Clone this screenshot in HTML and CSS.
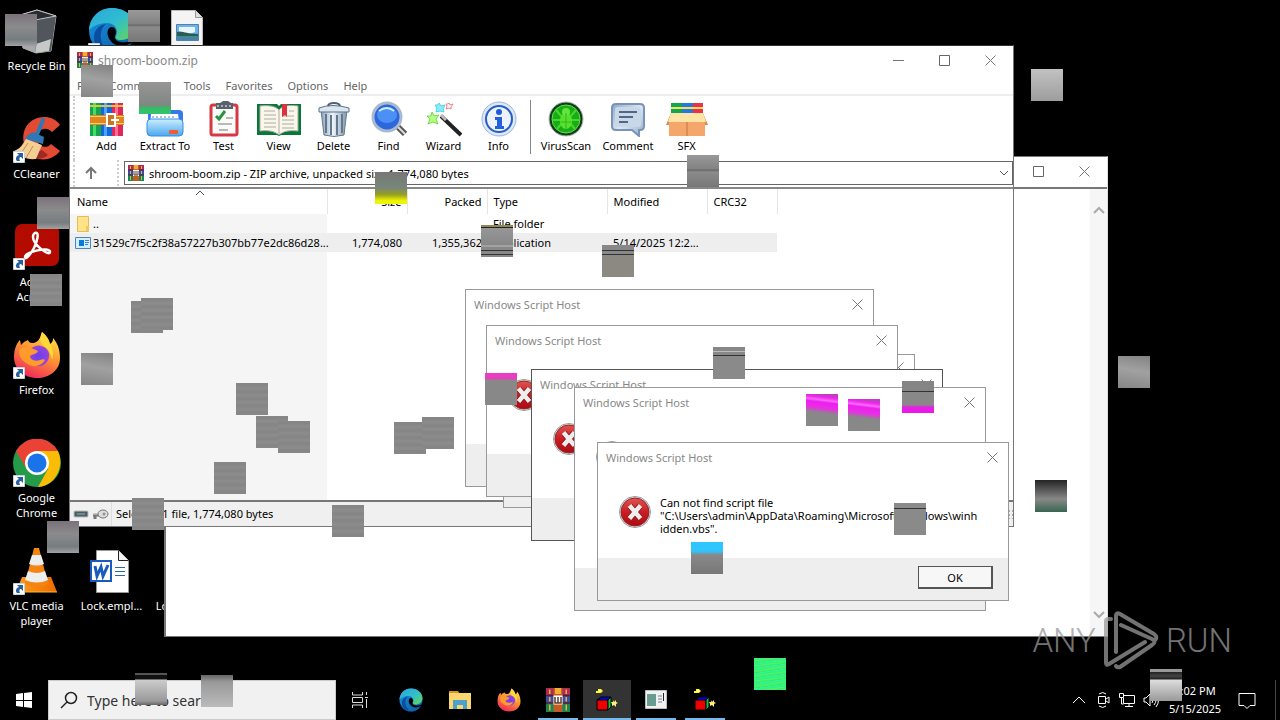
FILE: index.html
```html
<!DOCTYPE html>
<html lang="en">
<head>
<meta charset="utf-8">
<title>Desktop</title>
<link rel="stylesheet" href="styles.css">
</head>
<body>
<svg class="defs" aria-hidden="true">
  <defs>
    <linearGradient id="edge-a" x1="0" y1="0" x2="1" y2="1"><stop offset="0" stop-color="#2aa6dc"/><stop offset=".5" stop-color="#30bdcf"/><stop offset="1" stop-color="#67d94e"/></linearGradient>
    <linearGradient id="edge-b" x1="0" y1="0" x2="1" y2="1"><stop offset="0" stop-color="#1793df"/><stop offset="1" stop-color="#0c5aa6"/></linearGradient>
    <linearGradient id="fox-a" x1=".8" y1="0" x2=".3" y2="1"><stop offset="0" stop-color="#ffe94a"/><stop offset=".45" stop-color="#ff9730"/><stop offset="1" stop-color="#f0265c"/></linearGradient>
    <radialGradient id="fox-b"><stop offset="0" stop-color="#6b3df0"/><stop offset="1" stop-color="#9845d8"/></radialGradient>
    <linearGradient id="red-ball" x1="0" y1="0" x2="0" y2="1"><stop offset="0" stop-color="#df5550"/><stop offset=".5" stop-color="#c81d24"/><stop offset="1" stop-color="#a90c12"/></linearGradient>
    <linearGradient id="steel" x1="0" y1="0" x2="1" y2="0"><stop offset="0" stop-color="#8ca3b8"/><stop offset=".45" stop-color="#eef4fa"/><stop offset="1" stop-color="#8396aa"/></linearGradient>
    <linearGradient id="blue-box" x1="0" y1="0" x2="0" y2="1"><stop offset="0" stop-color="#cdeeff"/><stop offset="1" stop-color="#4ba7ee"/></linearGradient>
    <linearGradient id="orange" x1="0" y1="0" x2="1" y2="0"><stop offset="0" stop-color="#ff9d18"/><stop offset="1" stop-color="#ef6c00"/></linearGradient>
    <linearGradient id="comment-fill" x1="0" y1="0" x2="1" y2="1"><stop offset="0" stop-color="#8fa9c8"/><stop offset=".5" stop-color="#dbe7f4"/><stop offset="1" stop-color="#93acc9"/></linearGradient>
  </defs>
  <symbol id="rar" viewBox="0 0 16 16">
    <path fill="#b02a55" d="M0 0h16v5H0z"/><path fill="#384fa8" d="M0 5h16v5H0z"/><path fill="#198553" d="M0 10h16v6H0z"/>
    <path stroke="#571b3a" d="M0 5h16M0 10h16"/><path fill="#e7b23b" d="M2 1h1v3H2zM13 1h1v3h-1zM2 6h1v3H2zM13 6h1v3h-1zM2 11h1v4H2zM13 11h1v4h-1z"/>
    <path fill="#c35c22" d="M5 0h6v16H5z"/><path fill="#f3ad35" d="M6 0h4v4H6z"/><path fill="#fff" d="M5 5h6v6H5z"/><path stroke="#5d3b2a" d="M6 6v4h4V6M8 6v4" fill="none"/>
  </symbol>
  <symbol id="edge" viewBox="0 0 48 48">
    <circle cx="24" cy="24" r="23" fill="url(#edge-b)"/>
    <path fill="url(#edge-a)" d="M1 23C2 10 11 1 24 1c14 0 23 9 23 19 0 8-6 13-14 13-5 0-6-2-5-4 3-6-1-13-9-13C10 16 4 20 1 23z"/>
    <path fill="#0b4d9f" d="M18 17c-8 6-7 21 4 29-8 0-16-6-16-15 0-8 5-13 12-14z"/>
    <path fill="#000" d="M23 20c5 0 6 5 4 9-1 4 4 7 11 6 3 0 6-2 8-3-2 4-4 5-7 6-7 2-14 0-17-5-3-4-4-11 1-13z"/>
  </symbol>
  <symbol id="firefox" viewBox="0 0 48 48">
    <path fill="url(#fox-a)" d="M29 1c5 4 7 8 8 12 3-2 3-4 3-6 5 6 7 12 7 20 0 12-10 20-23 20S1 38 1 26C1 19 3 13 7 9l1 5 3-3 4-2c1 3 3 3 6 3 3-1 6-3 8-11z"/>
    <path fill="url(#fox-b)" d="M15 23c2-7 9-11 16-7 6 3 7 11 2 16-5 5-14 4-18-2z"/>
    <path fill="#ff9a2d" d="M6 19c4-4 12-3 19 1-1 3-5 3-8 5 0 3 4 6 10 4 3-1 4-1 5 0-4 7-13 8-19 3-5-3-7-8-7-13z"/>
    <path fill="#ffd93a" d="M29 1c5 4 7 8 8 12 3 4 4 11 2 16-1-7-4-11-8-14-5-4-4-9-2-14z"/>
  </symbol>
  <symbol id="shortcut" viewBox="0 0 12 12"><path fill="#fff" stroke="#c7d2dd" d="M.5.5h11v11H.5z"/><path fill="#285f9f" d="M4 2h6v6L8 6C6 6 6 8 7 10H4C2 8 3 5 6 4z"/></symbol>
  <symbol id="close" viewBox="0 0 11 11"><path d="m.5.5 10 10m0-10-10 10" fill="none" stroke="#777"/></symbol>
  <symbol id="maximize" viewBox="0 0 11 11"><path d="M.5.5h10v10H.5z" fill="none" stroke="#666"/></symbol>
  <symbol id="error" viewBox="0 0 32 32"><circle cx="16" cy="16" r="15.500" fill="#e8e8e8" stroke="#999"/><circle cx="16" cy="16" r="14" fill="url(#red-ball)" stroke="#96252a"/><path d="m11 10 10 12m0-12L11 22" stroke="#8f1015" stroke-width="6"/><path d="m10.500 9.500 11 13m0-13-11 13" stroke="#eee" stroke-width="4.500"/></symbol>
  <symbol id="cube" viewBox="0 0 24 24"><path fill="#00f" stroke="#000" d="m2 12 4-3h10l-3 3z"/><path fill="#e00" stroke="#000" d="M2 12h11v10H2z"/><path fill="#10c43a" stroke="#000" d="m13 12 3-3v10l-3 3z"/><path fill="#ff0" d="M1 3h2V1h3l2 2-2 2H1z"/><path fill="#fff" d="M4 2h2v2H4z"/><path fill="#ffed74" d="m18 12 1 2 2-2v2l2 1-2 1v3l-2-2-2 1v-2l-1-2h2z"/></symbol>
</svg>

<main class="desktop">
  <section class="icons" aria-label="Desktop icons">
    <a class="icon" href="#"><svg viewBox="0 0 48 48"><path fill="#666c72" stroke="#b4b8ba" d="m4 9 20-6 19 6-5 35-15 2-13-5z"/><path fill="#a5aaae" d="m4 9 18 4 1 33-13-5z"/><path fill="#50565b" d="m22 13 21-4-5 35-15 2z"/><path fill="#282b30" stroke="#c4c4c4" d="m4 9 20-6 19 6-21 4z"/><path fill="#c8c8c8" d="m23 37 15-5-2 12-13 2z"/></svg><span>Recycle Bin</span></a>
    <a class="icon" href="#" aria-label="Microsoft Edge"><svg viewBox="0 0 48 48"><use href="#edge"/><use href="#shortcut" x="0" y="36" width="12" height="12"/></svg></a>
    <a class="icon" href="#" aria-label="Image"><svg viewBox="0 0 48 48"><path fill="#f4f4f4" stroke="#bbb" d="M8.500 3.500h24l7 7v36h-31z"/><path fill="#ddd" stroke="#999" d="M32.500 3.500v7h7"/><path fill="#6ab4e9" stroke="#5480af" d="M13.500 17.500h22v16h-22z"/><path fill="#e7f5fb" d="M16 20h16v5l-8 3-8-4z"/><path fill="#285d54" d="M14 25c7-1 9 2 21 2v2H14z"/><path fill="#4585a2" d="M14 29h21v4H14z"/></svg></a>
    <a class="icon" href="#"><svg viewBox="0 0 48 48"><path fill="#e34a33" d="M47 10C39-2 18 0 12 14c-4 9-1 22 7 27 9 6 21 4 28-5l-9-7c-5 6-15 2-14-7 1-8 9-11 15-5z"/><path fill="#9f2925" d="M12 27c3 9 9 12 17 8l6 5c-7 6-16 4-22-2z"/><path stroke="#2d78b8" stroke-width="4" stroke-linecap="round" d="m30 5-7 17"/><path fill="#2f78b4" d="m15 20 5-3 11 5-1 7-18-5z"/><path fill="#f5ce94" d="M13 24 29 30l-6 14C14 45 5 41 1 36c6-2 9-7 12-12z"/><path stroke="#c78b52" d="m15 28-8 12m13-9-7 12"/><use href="#shortcut" x="0" y="36" width="12" height="12"/></svg><span>CCleaner</span></a>
    <a class="icon row3" href="#"><svg viewBox="0 0 48 48"><rect x="2" y="1" width="44" height="42" rx="7" fill="#b30b00"/><path fill="none" stroke="#fff" stroke-width="2.500" d="M22 10c5-2 2 9-1 15S12 38 12 34c0-5 25-11 25-5 0 5-17-7-17-15 0-2 0-3 2-4z"/><use href="#shortcut" y="35" width="12" height="12"/></svg><span>Adobe Acrobat</span></a>
    <a class="icon row4" href="#"><svg viewBox="0 0 48 48"><use href="#firefox"/><use href="#shortcut" y="36" width="12" height="12"/></svg><span>Firefox</span></a>
    <a class="icon row5" href="#"><svg viewBox="0 0 48 48"><circle cx="24" cy="24" r="24" fill="#249b48"/><path fill="#ea4335" d="M3 12A24 24 0 0 1 45 12H24L13 29z"/><path fill="#fbbc05" d="M24 12h21c7 16-3 35-20 36l10-18z"/><circle cx="24" cy="24" r="12" fill="#fff"/><circle cx="24" cy="24" r="9.500" fill="#1a73e8"/><use href="#shortcut" y="36" width="12" height="12"/></svg><span>Google Chrome</span></a>
    <a class="icon row6" href="#"><svg viewBox="0 0 48 48"><path fill="url(#orange)" d="m9 30-6 15h41l-6-15z"/><path fill="#f48513" d="m21 1-9 36q12 6 23 0L26 1z"/><path fill="#eee" d="m19 8-3 9q8 3 15 0L28 8zM15 24l-3 9q12 5 23 0l-3-9q-8 4-17 0z"/><path stroke="#ffb53b" d="M3 45h41"/><use href="#shortcut" y="36" width="12" height="12"/></svg><span>VLC media player</span></a>
    <a class="icon row6 col2" href="#"><svg viewBox="0 0 48 48"><path fill="#fff" stroke="#999" d="M8.500 3.500h22l10 10v32h-32z"/><path fill="#f2f2f2" stroke="#222" d="M30.500 3.500v10h10"/><path stroke="#2864b4" d="M27 20.500h10m-10 4h10m-10 4h10"/><path fill="#fff" stroke="#185abd" stroke-width="2" d="M3 14h20v20H3z"/><path fill="none" stroke="#185abd" stroke-width="3" d="m7 19 2 10 4-9 2 9 5-11"/></svg><span>Lock.empl...</span></a>
    <a class="icon row6 col3" href="#"><svg viewBox="0 0 48 48"></svg><span>Lock.empl...</span></a>
  </section>

  <section class="window back" aria-label="Background window">
    <header class="titlebar"><span class="title"></span><button aria-label="Maximize"><svg><use href="#maximize"/></svg></button><button aria-label="Close"><svg><use href="#close"/></svg></button></header>
    <div class="backbody"><div class="scroll"><svg viewBox="0 0 12 8"><path d="m1 7 5-5 5 5"/></svg><svg viewBox="0 0 12 8"><path d="m1 1 5 5 5-5"/></svg></div></div>
  </section>

  <section class="window archive" aria-label="shroom-boom.zip">
    <header class="titlebar"><svg class="appicon"><use href="#rar"/></svg><span class="title">shroom-boom.zip</span><button aria-label="Minimize"><svg viewBox="0 0 11 11"><path stroke="#777" d="M0 5.500h11"/></svg></button><button aria-label="Maximize"><svg><use href="#maximize"/></svg></button><button aria-label="Close"><svg><use href="#close"/></svg></button></header>
    <nav class="menu"><button>File</button><button>Commands</button><button>Tools</button><button>Favorites</button><button>Options</button><button>Help</button></nav>
    <div class="toolbar">
      <button><svg viewBox="0 0 36 36"><path fill="#16a34e" d="M1 2h11v33H1z"/><path fill="#1766d8" d="M12 2h11v33H12z"/><path fill="#dc285a" d="M23 2h11v33H23z"/><path fill="#43dd6a" d="M4 2h3v33H4z"/><path fill="#4ba3ff" d="M15 2h3v33h-3z"/><path fill="#ff6e94" d="M26 2h3v33h-3z"/><path fill="#dfc73d" d="M1 4h33v2H1z"/><path fill="#e08521" d="M1 14h34v10H1z"/><path stroke="#ffcf59" d="M1 15.500h34M1 22.500h34"/><rect x="18" y="13" width="8" height="12" fill="#c87623" stroke="#fff" stroke-width="2"/><path stroke="#fff" stroke-width="2" d="M22 19h8"/></svg><span>Add</span></button>
      <button class="wide"><svg viewBox="0 0 40 36"><rect x="3" y="9" width="35" height="24" rx="4" fill="#3679e9"/><path fill="#fff" d="M6 13h27l2 14H5z"/><path stroke="#5a83ba" stroke-dasharray="2 2" d="M7 16h24"/><rect x="2" y="18" width="36" height="17" rx="4" fill="url(#blue-box)" stroke="#348ee3"/><rect x="24" y="29" width="9" height="4" rx="1" fill="#f05b34"/></svg><span>Extract To</span></button>
      <button><svg viewBox="0 0 36 36"><rect x="5" y="4" width="26" height="30" rx="2" fill="#f8fbf7" stroke="#d63942" stroke-width="3"/><path fill="#59616c" d="M10 2h4l3-2h5l3 2h2v6H10z"/><path stroke="#fff" stroke-dasharray="2 2" d="M11 5h15"/><path fill="none" stroke="#2b9143" stroke-width="3" d="m10 15 3 3 6-8"/><path stroke="#777" d="M20 17h7M12 23h14m-13 6h9"/></svg><span>Test</span></button>
      <button><svg viewBox="0 0 44 36"><path fill="#087838" d="M0 3h20l2 2 2-2h20v31H24l-2 1-2-1H0z"/><path fill="#faf7e9" stroke="#aaa" d="M3 5c8-1 16 0 19 4 4-5 12-5 19-4v25c-8-1-15 0-19 4-4-4-12-5-19-4z"/><path stroke="#aaa" d="M22 9v24M7 10h11M7 14h12M7 18h12M7 22h12M7 26h12M25 15h12m-12 4h12m-12 4h12m-12 4h12M32 10h5"/><path fill="#de303e" d="M25 3h5v13l-2-2-3 2z"/></svg><span>View</span></button>
      <button><svg viewBox="0 0 36 36"><path fill="url(#steel)" stroke="#65798f" d="M5 9h26l-3 25q-10 3-20 0z"/><path stroke="#61798e" stroke-width="2" d="M10 13v19m5-18v20m6-20v20m5-21v19"/><path fill="#dce6ef" stroke="#58708b" d="M3 7q13-5 30 0v4H3z"/><path fill="none" stroke="#4e6071" stroke-width="2" d="M12 5c1-4 11-4 12 0"/></svg><span>Delete</span></button>
      <button><svg viewBox="0 0 36 36"><path stroke="#555" stroke-width="6" d="m25 24 9 9"/><path stroke="#ddd" stroke-width="2" d="m25 24 9 9"/><circle cx="16" cy="16" r="14" fill="#2d66dd" stroke="#a9b9d0" stroke-width="3"/><ellipse cx="16" cy="14" rx="10" ry="8" fill="#4b90f4"/><path fill="none" stroke="#cbedff" stroke-width="2" d="M8 10q8-6 15 0"/></svg><span>Find</span></button>
      <button><svg viewBox="0 0 36 36"><path stroke="#222" stroke-width="4" d="m15 15 20 19"/><path stroke="#bbb" stroke-width="3" d="m15 14 5 5"/><path fill="#b8ff85" stroke="#71dc46" d="m6 11 2 4 5-1-3 4 2 5-5-2-5 2 2-5-3-3h4z"/><path fill="#8dedfa" stroke="#4ad4ed" d="m13 2 2 3 4-1-2 4 1 3-4-1-4 1 1-4-2-3h3z"/><path fill="none" stroke="#ff7d85" d="m23 2 1 2 3-1-2 3v2l-2-1-3 1 1-3-1-2h2z"/></svg><span>Wizard</span></button>
      <button><svg viewBox="0 0 36 36"><circle cx="18" cy="18" r="17" fill="#dfe8f6" stroke="#9bb5dc"/><circle cx="18" cy="18" r="13" fill="#edf3fc" stroke="#275fc9" stroke-width="2"/><circle cx="18" cy="11" r="3" fill="#205bdc"/><path fill="#245fdd" d="M14 16h7v9h2v3h-9v-3h2v-6h-2z"/></svg><span>Info</span></button>
      <i class="separator"></i>
      <button class="wide"><svg viewBox="0 0 36 36"><circle cx="18" cy="18" r="17" fill="#113d1c" stroke="#afbdb2"/><circle cx="18" cy="18" r="14" fill="#18ac18" stroke="#64e345"/><path stroke="#45d82b" stroke-width="2" d="m8 9 6 7m14-7-6 7M5 19h8m18 0h-8M9 28l5-6m13 6-5-6"/><ellipse cx="18" cy="20" rx="6" ry="8" fill="#58e12b"/><circle cx="18" cy="11" r="4" fill="#64e53b"/><path stroke="#30b525" d="M18 12v16m-5-7h10"/></svg><span>VirusScan</span></button>
      <button class="wide"><svg viewBox="0 0 36 36"><path fill="url(#comment-fill)" stroke="#7994b6" stroke-width="2" d="M6 3h24q4 0 4 4v18q0 4-4 4h-1v6l-7-6H6q-4 0-4-4V7q0-4 4-4z"/><rect x="5" y="6" width="26" height="20" rx="3" fill="#c9d8e9"/><path stroke="#506888" stroke-width="2" d="M9 11h18M9 16h14M9 21h9"/></svg><span>Comment</span></button>
      <button><svg viewBox="0 0 44 36"><path fill="#e7334f" d="M28 2h10v12H28z"/><path fill="#2479de" d="M17 2h11v12H17z"/><path fill="#11a657" d="M6 2h11v12H6z"/><path fill="#ffe04b" d="M6 6h32v2H6z"/><path fill="#d68954" d="m6 12-5 12h5zm32 0 5 12h-5z"/><path fill="#f4a66b" d="M4 18h36v17H4z"/><path fill="#ffe5a5" d="M6 12h32l3 9H3z"/><path stroke="#bd7749" d="M22 21v14"/></svg><span>SFX</span></button>
    </div>
    <div class="addressrow"><button class="up" aria-label="Up"><svg viewBox="0 0 12 14"><path fill="none" stroke="#777" stroke-width="2" d="M6 13V2M1 7l5-5 5 5"/></svg></button><div class="address"><svg><use href="#rar"/></svg><input aria-label="Archive path" value="shroom-boom.zip - ZIP archive, unpacked size 1,774,080 bytes"><svg class="chevron" viewBox="0 0 10 6"><path d="m1 1 4 4 4-4"/></svg></div></div>
    <div class="filelist">
      <svg class="sort" viewBox="0 0 10 6"><path d="m1 5 4-4 4 4"/></svg>
      <table>
        <colgroup><col class="c-name"><col class="c-num"><col class="c-num"><col class="c-type"><col class="c-mod"><col class="c-crc"></colgroup>
        <thead><tr><th>Name</th><th class="num">Size</th><th class="num">Packed</th><th>Type</th><th>Modified</th><th>CRC32</th></tr></thead>
        <tbody>
          <tr><td><span class="file"><svg viewBox="0 0 16 16"><path fill="#ffe38b" stroke="#e7bd52" d="M2.500.5h11v15h-11z"/><path fill="#f3c85b" d="M11 10h3v5h-3z"/></svg>..</span></td><td></td><td></td><td>File folder</td><td></td><td></td></tr>
          <tr class="selected"><td><span class="file"><svg viewBox="0 0 16 16"><path fill="#d9edf8" stroke="#4c86b4" d="M.5 2.500h15v11H.5z"/><path fill="#0879df" d="M4 5h5v6H4z"/><path stroke="#338bcf" d="M10 5.500h4m-4 2h4m-4 2h3"/></svg>31529c7f5c2f38a57227b307bb77e2dc86d28...</span></td><td class="num">1,774,080</td><td class="num">1,355,362</td><td>Application</td><td>5/14/2025 12:2...</td><td></td></tr>
        </tbody>
      </table>
    </div>
    <footer class="status"><svg viewBox="0 0 36 14"><rect x="1" y="4" width="14" height="6" rx="1" fill="#4c5e65" stroke="#b7bfc2"/><path stroke="#9eadb1" d="M4 7h8"/><path stroke="#777" stroke-width="3" d="M20 8h10m-8 0v4"/><path stroke="#ddd" d="M20 7h10"/><ellipse cx="30" cy="7" rx="5" ry="4" fill="#ddd" stroke="#777"/><circle cx="31" cy="7" r="1" fill="#fff" stroke="#777"/></svg><span>Selected 1 file, 1,774,080 bytes</span><i class="grip"></i></footer>
  </section>

  <section class="dialog d1"><header><span>Windows Script Host</span><button aria-label="Close"><svg><use href="#close"/></svg></button></header><div class="message"></div><footer></footer></section>
  <section class="dialog d2"><header><span></span><button aria-label="Close"><svg><use href="#close"/></svg></button></header><div class="message"></div><footer></footer></section>
  <section class="dialog d3"><header><span>Windows Script Host</span><button aria-label="Close"><svg><use href="#close"/></svg></button></header><div class="message"><svg><use href="#error"/></svg></div><footer></footer></section>
  <section class="dialog d4"><header><span>Windows Script Host</span><button aria-label="Close"><svg><use href="#close"/></svg></button></header><div class="message"><svg><use href="#error"/></svg></div><footer></footer></section>
  <section class="dialog d5"><header><span>Windows Script Host</span><button aria-label="Close"><svg><use href="#close"/></svg></button></header><div class="message"><svg><use href="#error"/></svg></div><footer></footer></section>
  <section class="dialog d6"><header><span>Windows Script Host</span><button aria-label="Close"><svg><use href="#close"/></svg></button></header><div class="message"><svg><use href="#error"/></svg><p>Can not find script file<br>"C:\Users\admin\AppData\Roaming\Microsoft\Windows\winh<br>idden.vbs".</p></div><footer><button class="ok">OK</button></footer></section>

  <div class="brand"><span>ANY</span><svg viewBox="0 0 56 64"><path fill="none" stroke="currentColor" stroke-width="4" stroke-linecap="round" stroke-linejoin="round" d="M8 10H5q-2 0-2 3v41q0 3 3 1l36-22M13 43V7q0-4 4-2l34 20q4 3 1 6M18 16l31 14q5 3 0 6L17 58q-3 1-4-1"/></svg><span>RUN</span></div>
</main>

<footer class="taskbar">
  <button class="start" aria-label="Start"><svg viewBox="0 0 16 16"><path fill="#fff" d="m0 2 7-1v7H0zM8 1l8-1v8H8zM0 9h7v6l-7-1zM8 9h8v7l-8-1z"/></svg></button>
  <label class="search"><svg viewBox="0 0 18 18"><circle cx="11" cy="7" r="5.500"/><path d="m7 11-6 6"/></svg><input aria-label="Search" placeholder="Type here to search"></label>
  <button class="taskview" aria-label="Task View"><svg viewBox="0 0 16 16"><path d="M.5 0v3h10V0M.5 5.500h10v5H.5zM.5 16v-3h10v3M14.500 0v3m0 4v9M13 5.500h3"/></svg></button>
  <nav class="apps">
    <button aria-label="Edge"><svg><use href="#edge"/></svg></button>
    <button aria-label="File Explorer"><svg viewBox="0 0 24 24"><path fill="#d9981b" d="M1 3h9l2 3H1z"/><path fill="#fbd66e" d="M1 5h22v16H1z"/><path fill="#4ba0cd" d="M5 12h14v9h-4v-4H9v4H5z"/></svg></button>
    <button aria-label="Firefox"><svg><use href="#firefox"/></svg></button>
    <button class="open" aria-label="WinRAR"><svg><use href="#rar"/></svg></button>
    <button class="open active" aria-label="Application"><svg><use href="#cube"/></svg></button>
    <button class="open" aria-label="Script Host"><svg viewBox="0 0 24 24"><path fill="#f1f1f1" stroke="#bbb" d="M1.500 2.500h21v18h-21z"/><path fill="#689b91" d="M3 6h9v12H3z"/><path stroke="#73858c" d="M14 8h4m-4 3h4m-4 3h4"/><path stroke="#222" d="M19.500 5v8"/></svg></button>
    <button class="open" aria-label="Application"><svg><use href="#cube"/></svg></button>
  </nav>
  <div class="tray">
    <svg viewBox="0 0 16 16"><path d="m2 11 6-6 6 6"/></svg>
    <svg viewBox="0 0 16 16"><path d="M3.500 4.500h7v7h-7zM11 7l3-2v6l-3-2M4 2q4-3 7 0M4 14q4 3 7 0"/></svg>
    <svg viewBox="0 0 16 16"><path d="M5 3.500h10.500v8H4.500V6M10 12v3M6 14.500h8M.5 1.500h4v4h-4zM2.500 6v6h2"/></svg>
    <svg viewBox="0 0 16 16"><path d="M1 6h2l4-4v12l-4-4H1zM9 6q2 2 0 5m2-7q4 4 0 9m2-11q5 6 0 13"/></svg>
    <time>5:02 PM<br>5/15/2025</time>
    <svg class="notice" viewBox="0 0 18 18"><path d="M1 2.500h16v12h-5l-3 3-3-3H1z"/></svg>
    <i class="peek"></i>
  </div>
</footer>

<div class="tiles" aria-hidden="true">
  <i class="t01 dim"></i><i class="t02"></i><i class="t03"></i><i class="t04 green"></i><i class="t05 light"></i><i class="t06"></i><i class="t07 yellow"></i><i class="t08 dim"></i><i class="t09"></i><i class="t10 bars"></i><i class="t11 bars"></i><i class="t12"></i><i class="t13"></i><i class="t14"></i><i class="t15"></i><i class="t16"></i><i class="t17"></i><i class="t18"></i><i class="t19"></i><i class="t20"></i><i class="t21"></i><i class="t22"></i><i class="t23 dim"></i><i class="t24 dark"></i><i class="t25"></i><i class="t26 bars"></i><i class="t27 pinktop"></i><i class="t28 pink"></i><i class="t29 pink"></i><i class="t30 pinkbottom"></i><i class="t31 bars"></i><i class="t32 blue"></i><i class="t33 lime"></i><i class="t34 split"></i><i class="t35 split"></i><i class="t36 fade"></i>
</div>
</body>
</html>
```
FILE: styles.css
```css
* { box-sizing: border-box; }
body { margin: 0; height: 100vh; overflow: hidden; display: flex; flex-direction: column; position: relative; background: #000; color: #000; font: 11px/13px "Noto Sans", "Open Sans", sans-serif; }
button, input { font: inherit; color: inherit; border: 0; background: none; padding: 0; margin: 0; }
svg { display: block; flex: none; }
.defs { position: absolute; width: 0; height: 0; }
.desktop { flex: 1; min-height: 0; position: relative; }

.icons { display: grid; grid-template-columns: repeat(3, 75px); grid-auto-rows: 108px; padding-top: 7px; margin-left: -1px; }
.icon { color: #fff; text-decoration: none; display: flex; flex-direction: column; align-items: center; gap: 3px; text-align: center; line-height: 15px; }
.icon svg { width: 48px; height: 48px; }
.icon span { max-width: 66px; }
.row3 { grid-row: 3; grid-column: 1; }
.row4 { grid-row: 4; grid-column: 1; }
.row5 { grid-row: 5; grid-column: 1; }
.row6 { grid-row: 6; grid-column: 1; }
.col2 { grid-column: 2; }
.col3 { grid-column: 3; }

.window { position: absolute; background: #fff; display: flex; flex-direction: column; }
.back { left: 164px; top: 156px; width: 944px; height: 481px; border: 1px solid #777; border-left-width: 2px; border-right-color: #ddd; }
.archive { left: 69px; top: 45px; width: 945px; height: 482px; border: 1px solid #777; border-top-color: #333; }
.titlebar { height: 30px; display: flex; align-items: center; color: #888; font-size: 12px; flex: none; padding-bottom: 2px; }
.titlebar .title { flex: 1; padding-left: 5px; }
.titlebar .appicon { width: 16px; height: 16px; margin-left: 7px; }
.titlebar button { width: 46px; display: grid; place-items: center; }
.titlebar button svg { width: 11px; height: 11px; }
.backbody { flex: 1; border-top: 2px solid #777; display: flex; justify-content: flex-end; }
.scroll { width: 17px; background: #f6f6f6; display: flex; flex-direction: column; justify-content: space-between; align-items: center; padding: 17px 0; }
.scroll svg { width: 12px; height: 8px; }
.scroll path { fill: none; stroke: #aaa; stroke-width: 2; }

.menu { height: 20px; display: flex; gap: 15px; padding-left: 7px; border-bottom: 2px solid #eee; color: #666; flex: none; }
.toolbar { height: 64px; display: flex; margin-left: 3px; padding-left: 4px; border-left: 2px dotted #ccc; flex: none; }
.toolbar button { width: 55px; display: flex; flex-direction: column; align-items: center; padding-top: 5px; gap: 2px; white-space: nowrap; }
.toolbar button.wide { width: 62px; }
.toolbar svg { height: 36px; min-width: 36px; }
.separator { width: 1px; height: 54px; background: #888; margin: 4px; }
.addressrow { height: 27px; display: flex; margin-left: 3px; padding-bottom: 1px; border-left: 2px dotted #ccc; flex: none; }
.up { width: 44px; padding-right: 10px; display: grid; place-items: center; border-right: 2px dotted #ccc; }
.up svg { width: 12px; height: 14px; }
.address { flex: 1; margin: 1px 0 1px 5px; border: 1px solid #666; display: flex; align-items: center; padding: 0 3px; gap: 5px; }
.address svg { width: 16px; height: 16px; }
.address input { flex: 1; min-width: 0; outline: 0; }
.address .chevron { width: 10px; height: 6px; }
.chevron path, .sort path { fill: none; stroke: #555; }

.filelist { flex: 1; position: relative; border-top: 2px solid #888; border-bottom: 2px solid #777; background: linear-gradient(#f5f5f5, #f5f5f5) no-repeat left / 257px 100%; overflow: hidden; }
.sort { position: absolute; left: 125px; top: 1px; width: 10px; height: 6px; }
.filelist table { width: 707px; border-collapse: collapse; table-layout: fixed; }
.filelist thead { background: #fff; }
.filelist tr { height: 19px; }
.filelist thead tr { height: 25px; }
.filelist th { font-weight: 400; text-align: left; padding: 0 6px; border-right: 1px solid #e5e5e5; }
.filelist th:first-child { padding-left: 7px; }
.filelist td { padding: 0 6px; white-space: nowrap; }
.filelist .num { text-align: right; padding-right: 5px; }
.filelist td:first-child { padding: 0 0 0 5px; }
.c-name { width: 257px; }
.c-num { width: 80px; }
.c-type { width: 120px; }
.c-mod { width: 100px; }
.c-crc { width: 70px; }
.selected { background: #eee; }
.file { display: flex; align-items: center; gap: 2px; }
.file svg { width: 16px; height: 16px; }
.status { height: 24px; background: #f0f0f0; display: flex; align-items: center; padding-left: 3px; gap: 2px; flex: none; }
.status > svg { width: 36px; height: 14px; }
.status span { flex: 1; border-left: 1px solid #ddd; padding-left: 4px; line-height: 24px; }
.grip { width: 10px; height: 10px; background: radial-gradient(#aaa 1px, transparent 1px) 0 0 / 4px 4px; }

.dialog { position: absolute; width: 412px; background: #fff; border: 1px solid #999; display: flex; flex-direction: column; }
.dialog header { height: 28px; display: flex; align-items: center; justify-content: space-between; padding: 0 10px 0 8px; color: #888; font-size: 11px; flex: none; }
.dialog header svg { width: 11px; height: 11px; }
.message { flex: 1; min-height: 0; padding: 25px 20px 0 21px; display: flex; gap: 9px; overflow: hidden; }
.message svg { width: 32px; height: 32px; }
.message p { margin: 0; white-space: nowrap; }
.dialog footer { height: 42px; background: #eee; padding: 8px 15px; display: flex; justify-content: flex-end; align-items: flex-start; flex: none; }
.ok { width: 75px; height: 23px; border: 1px solid #555; border-right-width: 2px; border-bottom-width: 2px; background: #f7f7f7; }
.d1 { left: 465px; top: 289px; width: 409px; height: 198px; }
.d2 { left: 503px; top: 354px; height: 154px; }
.d2 header { height: 24px; }
.d3 { left: 486px; top: 325px; height: 172px; }
.d4 { left: 531px; top: 369px; height: 172px; border-color: #555; }
.d5 { left: 574px; top: 387px; height: 224px; }
.d6 { left: 597px; top: 442px; height: 159px; }

.brand { position: absolute; right: 48px; top: 609px; display: flex; align-items: center; gap: 7px; color: #999; opacity: .75; font: 300 33px/64px "Roboto", sans-serif; }
.brand svg { width: 56px; height: 64px; }

.taskbar { height: 40px; display: flex; align-items: stretch; flex: none; color: #fff; position: relative; }
.start, .taskview { width: 48px; display: grid; place-items: center; }
.start svg, .taskview svg { width: 16px; height: 16px; }
.taskview path { fill: none; stroke: #ddd; }
.search { width: 288px; background: #f1f1f1; border: 1px solid #ccc; display: flex; align-items: center; gap: 9px; padding-left: 11px; }
.search svg { width: 18px; height: 18px; }
.search svg circle, .search svg path { fill: none; stroke: #222; stroke-width: 1.500; }
.search input { flex: 1; min-width: 0; font-size: 14px; }
.search input::placeholder { color: #333; opacity: 1; }
.apps { display: flex; gap: 1px; padding-left: 3px; flex: 1; }
.apps button { width: 48px; display: flex; flex-direction: column; align-items: center; justify-content: space-between; padding-top: 8px; }
.apps svg { width: 24px; height: 24px; }
.apps .open::after { content: ""; width: 40px; height: 2px; background: #76b9ed; }
.apps .active { background: #333; }
.apps .active::after { width: 48px; }
.tray { display: flex; align-items: center; gap: 8px; padding-right: 4px; }
.tray svg { width: 16px; height: 16px; }
.tray path { fill: none; stroke: #fff; }
.tray time { width: 56px; text-align: center; line-height: 18px; font-size: 11px; }
.tray .notice { width: 18px; height: 18px; margin-left: 7px; }
.peek { width: 1px; height: 40px; margin-left: 11px; background: #444; }

.tiles i { position: absolute; width: 32px; height: 32px; background: repeating-linear-gradient(#868686, #868686 3px, #8b8b8b 4px, #8b8b8b 7px); }
.tiles .t02, .tiles .t06 { background: linear-gradient(#999, #828282 14px, #666 15px, #8b8b8b 17px, #777); }
.tiles .t03, .tiles .t14, .tiles .t25 { background: linear-gradient(190deg, #828282, #a1a1a1 45%, #868686); }
.tiles .green { background: linear-gradient(#969696, #7f8781 75%, #37b767 78%, #31c76c); }
.tiles .light { background: linear-gradient(#c2c2c2, #9d9d9d); }
.tiles .yellow { background: linear-gradient(#777, #778779 50%, #969d22 70%, #eef500 90%); }
.tiles .dim { background: linear-gradient(#7b717b, #8b8b8b 40%, #767d80 80%, #a1a1a1); }
.tiles .bars { background: linear-gradient(#8b8b53 2px, #222 2px, #222 3px, #969696 3px, #888 20px, #bbb 21px, #888 22px, #888 25px, #333 25px, #333 26px, #888 26px, #888 29px, #333 29px, #333 30px, #888 30px); }
.tiles .t11 { background: linear-gradient(#888 5px, #333 5px, #333 6px, #888 6px, #888 9px, #333 9px, #333 10px, #8b8982 10px); }
.tiles .t26 { background: linear-gradient(#888 4px, #bbb 4px, #bbb 5px, #888 5px, #888 8px, #333 8px, #333 9px, #8a8a8a 9px); }
.tiles .t31 { background: linear-gradient(#8a8a8a 5px, #333 5px, #333 6px, #8a8a8a 6px); }
.tiles .dark { background: linear-gradient(#242424, #888 60%, #366650); }
.tiles .pinktop { background: linear-gradient(#ed3bc8, #e342b7 6px, #888 7px); }
.tiles .pink { background: linear-gradient(187deg, #c43bc8 3px, #f026ee 5px, #fa69fa 8px, #ec1ff0 10px, #e830e2 16px, #888 21px); }
.tiles .pinkbottom { background: linear-gradient(#858585 10px, #333 10px, #333 11px, #888 11px, #888 24px, #e620e5 26px, #ed17e8); }
.tiles .blue { background: linear-gradient(#2fc6ff 9px, #898989 13px, #777); }
.tiles .lime { background: repeating-linear-gradient(172deg, #35f29a 0, #2df37d 2px, #57ed70 3px, #25f261 5px); }
.tiles .split { background: linear-gradient(#999 3px, #222 3px, #444 7px, #222 10px, #ddd 11px, #999); }
.tiles .t35 { background: linear-gradient(#555 2px, #111 2px, #111 6px, #ccc 7px, #999 28px, #666); }
.tiles .fade { background: linear-gradient(#666, #999 7px, #bbb); }
.t01 { left: 5px; top: 14px; } .t02 { left: 128px; top: 10px; }
.t03 { left: 81px; top: 65px; } .t04 { left: 139px; top: 82px; }
.t05 { left: 1031px; top: 69px; } .t06 { left: 687px; top: 155px; }
.t07 { left: 375px; top: 172px; } .t08 { left: 37px; top: 197px; }
.t09 { left: 30px; top: 274px; } .t10 { left: 481px; top: 225px; }
.t11 { left: 602px; top: 245px; } .t12 { left: 131px; top: 301px; }
.t13 { left: 141px; top: 298px; } .t14 { left: 81px; top: 353px; }
.t15 { left: 236px; top: 383px; } .t16 { left: 256px; top: 416px; }
.t17 { left: 278px; top: 421px; } .t18 { left: 394px; top: 422px; }
.t19 { left: 422px; top: 417px; } .t20 { left: 214px; top: 462px; }
.t21 { left: 132px; top: 498px; } .t22 { left: 332px; top: 505px; }
.t23 { left: 47px; top: 521px; } .t24 { left: 1035px; top: 480px; }
.t25 { left: 1118px; top: 356px; } .t26 { left: 713px; top: 347px; }
.t27 { left: 485px; top: 373px; } .t28 { left: 806px; top: 394px; }
.t29 { left: 848px; top: 399px; } .t30 { left: 902px; top: 381px; }
.t31 { left: 894px; top: 503px; } .t32 { left: 691px; top: 542px; }
.t33 { left: 754px; top: 658px; } .t34 { left: 1150px; top: 669px; }
.t35 { left: 135px; top: 673px; } .t36 { left: 201px; top: 675px; }
```
